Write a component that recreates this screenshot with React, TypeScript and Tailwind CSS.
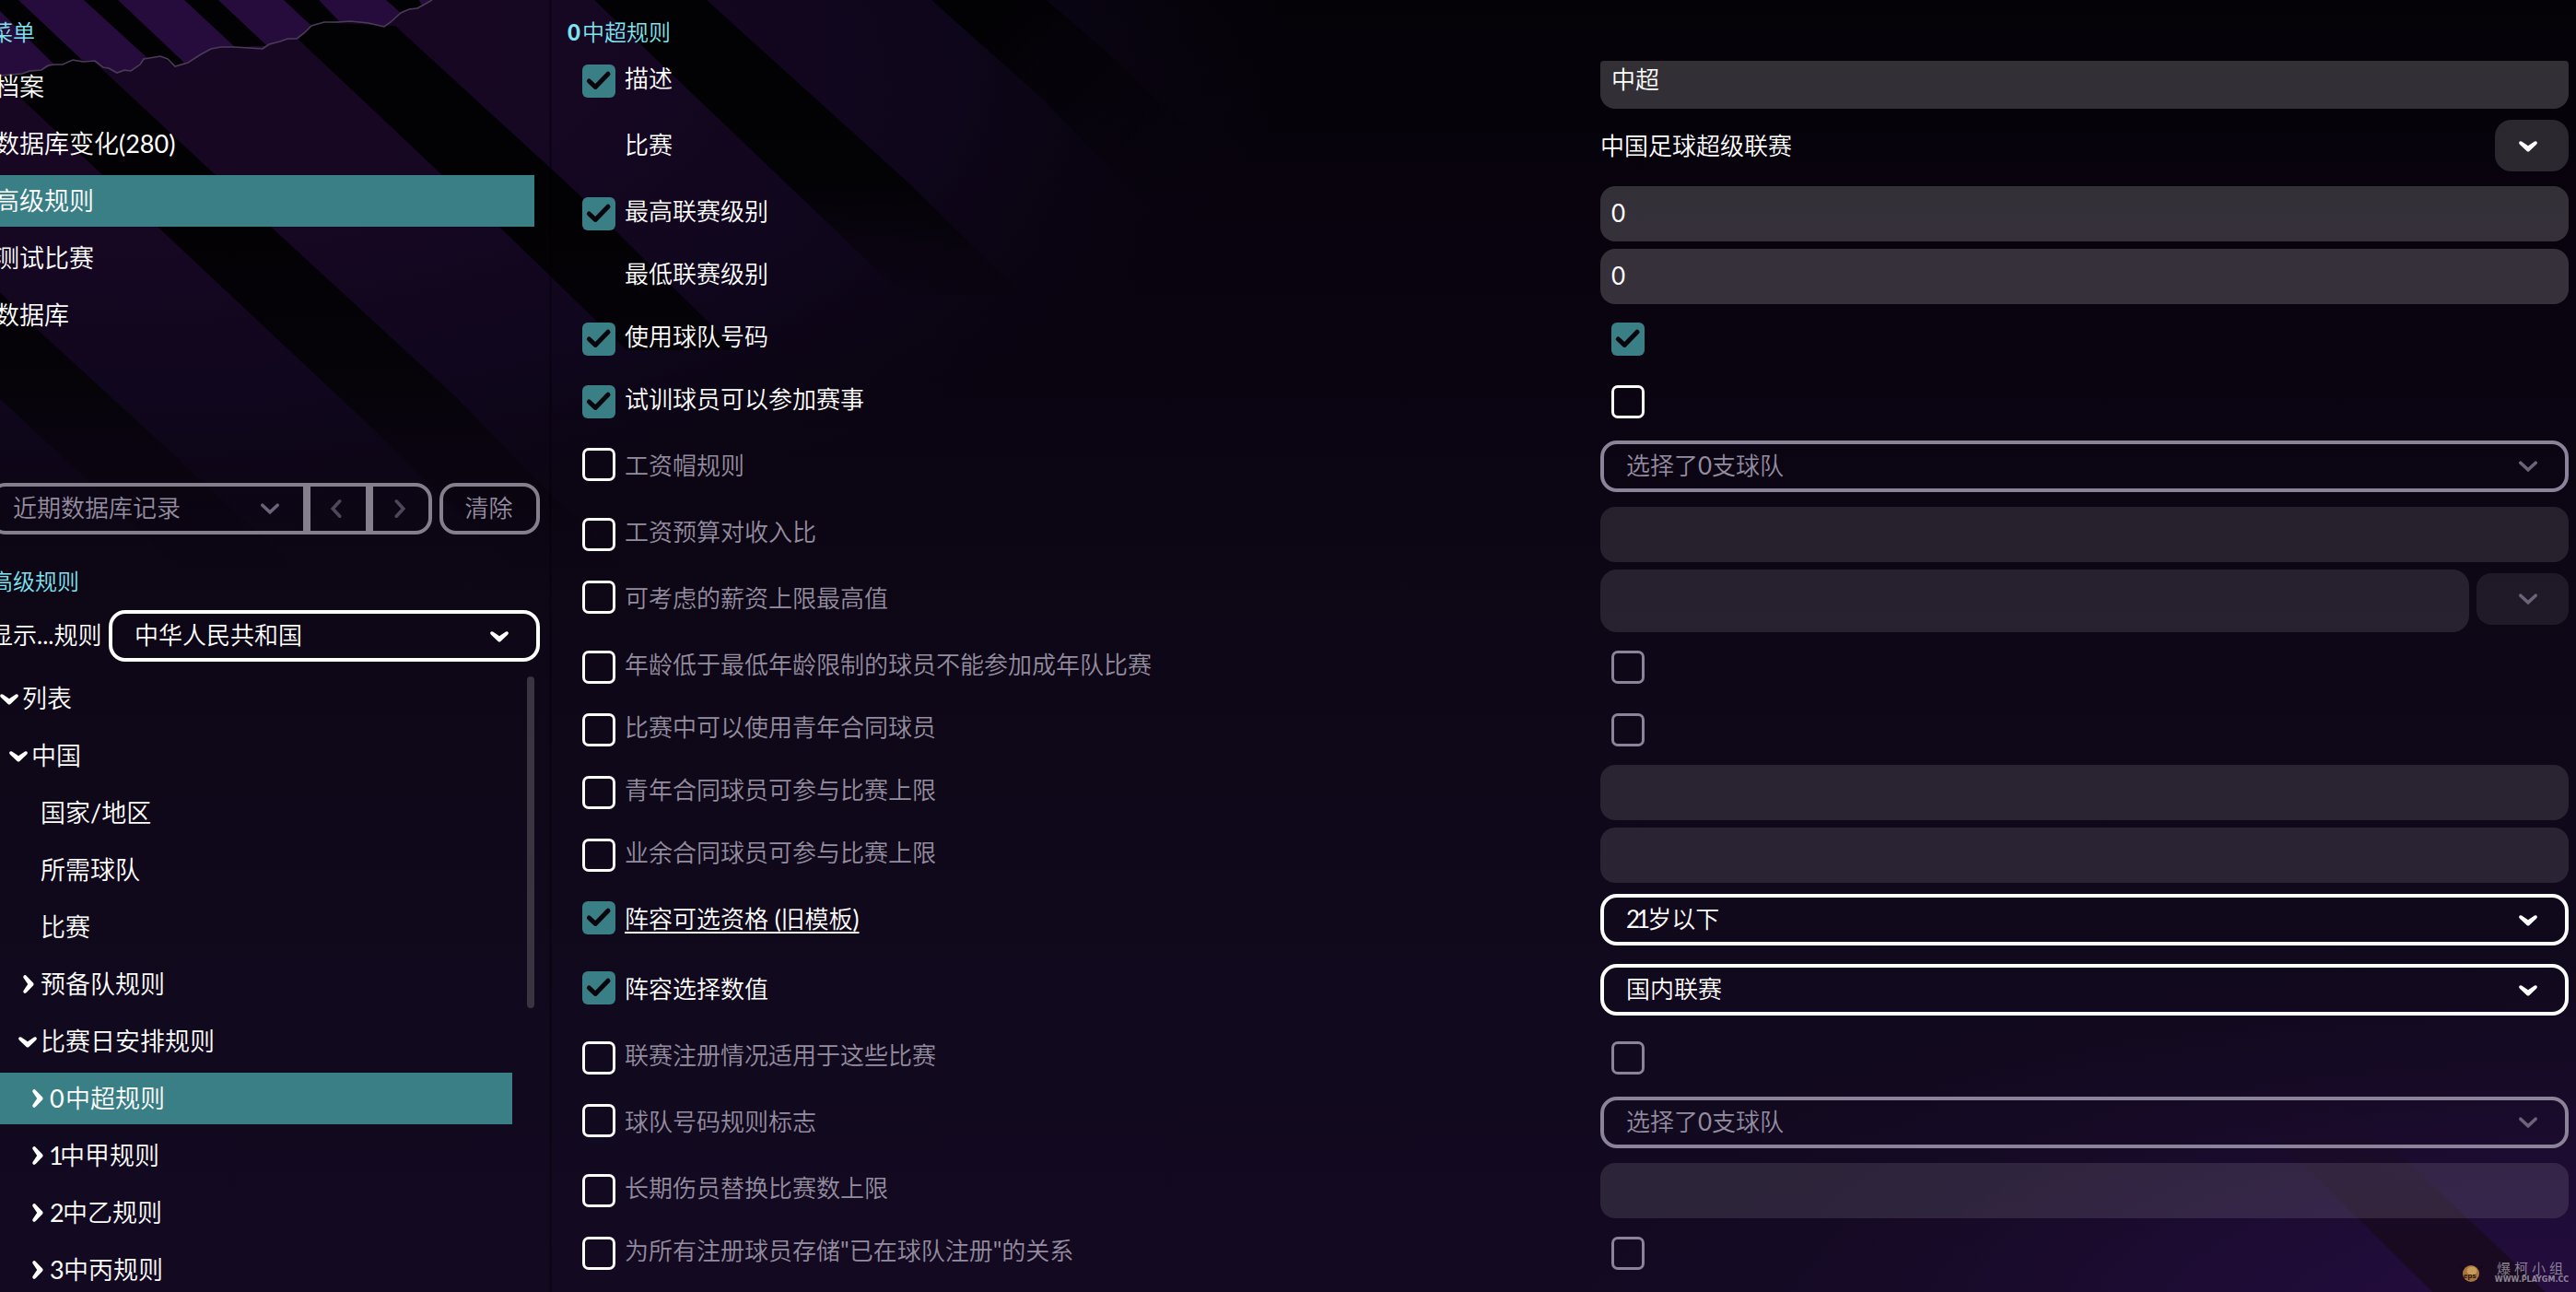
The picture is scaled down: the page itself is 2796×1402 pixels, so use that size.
import { type ReactNode } from 'react';
import clsx from 'clsx';

type Control =
  | { kind: 'input'; value?: string; clipped?: boolean }
  | { kind: 'select'; value: ReactNode }
  | { kind: 'check'; checked?: boolean }
  | { kind: 'link'; value: string }
  | { kind: 'money' };

interface Rule {
  label: string;
  // undefined means the rule has no override checkbox
  checked?: boolean;
  off?: boolean;
  underline?: boolean;
  control: Control;
}

const under21 = (
  <>
    2<span className="-mr-[3px] -ml-[4px]">1</span>岁以下
  </>
);

const rules: Rule[] = [
  { label: '描述', checked: true, control: { kind: 'input', value: '中超', clipped: true } },
  { label: '比赛', control: { kind: 'link', value: '中国足球超级联赛' } },
  { label: '最高联赛级别', checked: true, control: { kind: 'input', value: '0' } },
  { label: '最低联赛级别', control: { kind: 'input', value: '0' } },
  { label: '使用球队号码', checked: true, control: { kind: 'check', checked: true } },
  { label: '试训球员可以参加赛事', checked: true, control: { kind: 'check' } },
  { label: '工资帽规则', checked: false, off: true, control: { kind: 'select', value: '选择了0支球队' } },
  { label: '工资预算对收入比', checked: false, off: true, control: { kind: 'input' } },
  { label: '可考虑的薪资上限最高值', checked: false, off: true, control: { kind: 'money' } },
  { label: '年龄低于最低年龄限制的球员不能参加成年队比赛', checked: false, off: true, control: { kind: 'check' } },
  { label: '比赛中可以使用青年合同球员', checked: false, off: true, control: { kind: 'check' } },
  { label: '青年合同球员可参与比赛上限', checked: false, off: true, control: { kind: 'input' } },
  { label: '业余合同球员可参与比赛上限', checked: false, off: true, control: { kind: 'input' } },
  { label: '阵容可选资格 (旧模板)', checked: true, underline: true, control: { kind: 'select', value: under21 } },
  { label: '阵容选择数值', checked: true, control: { kind: 'select', value: '国内联赛' } },
  { label: '联赛注册情况适用于这些比赛', checked: false, off: true, control: { kind: 'check' } },
  { label: '球队号码规则标志', checked: false, off: true, control: { kind: 'select', value: '选择了0支球队' } },
  { label: '长期伤员替换比赛数上限', checked: false, off: true, control: { kind: 'input' } },
  { label: '为所有注册球员存储"已在球队注册"的关系', checked: false, off: true, control: { kind: 'check' } },
];

const menu = ['档案', '数据库变化(280)', '高级规则', '测试比赛', '数据库'];

interface Node {
  label: string;
  digit?: string;
  pad: string;
  open?: boolean;
  selected?: boolean;
}

const tree: Node[] = [
  { label: '列表', pad: 'pl-0', open: true },
  { label: '中国', pad: 'pl-[10px]', open: true },
  { label: '国家/地区', pad: 'pl-[20px]' },
  { label: '所需球队', pad: 'pl-[20px]' },
  { label: '比赛', pad: 'pl-[20px]' },
  { label: '预备队规则', pad: 'pl-[20px]', open: false },
  { label: '比赛日安排规则', pad: 'pl-[20px]', open: true },
  { label: '中超规则', digit: '0', pad: 'pl-[30px]', open: false, selected: true },
  { label: '中甲规则', digit: '1', pad: 'pl-[30px]', open: false },
  { label: '中乙规则', digit: '2', pad: 'pl-[30px]', open: false },
  { label: '中丙规则', digit: '3', pad: 'pl-[30px]', open: false },
];

const digitWidth: Record<string, string> = {
  '0': 'w-[17px]',
  '1': '-ml-px w-[12px]',
  '2': 'w-[14px]',
  '3': 'w-[15px]',
};

// Solid chevron, drawn pointing down
function Chevron({ className }: { className?: string }) {
  return (
    <svg viewBox="0 0 20 12" className={clsx('h-3 w-5 shrink-0', className)} fill="currentColor">
      <path d="M3 .5 Q10 5.2 10 5.2 Q10 5.2 17 .5 Q19 -.2 19.8 1.4 Q20.2 2.8 18.8 4 L11.4 11 Q10 12.2 8.6 11 L1.2 4 Q-.2 2.8 .2 1.4 Q1 -.2 3 .5Z" />
    </svg>
  );
}

function ThinChevron({ className }: { className?: string }) {
  return (
    <svg viewBox="0 0 20 12" className={clsx('h-3 w-5 shrink-0 overflow-visible', className)} fill="none" stroke="currentColor" strokeWidth="3.6" strokeLinecap="round">
      <path d="M1.8 2.2 L10 9.8 L18.2 2.2" />
    </svg>
  );
}

function CheckBox({ checked, off }: { checked?: boolean; off?: boolean }) {
  if (checked) {
    return (
      <div className="size-9 rounded-[6px] bg-[#3a7f86]">
        <svg viewBox="0 0 36 36" className="size-9" fill="none" stroke="#06050c" strokeWidth="5" strokeLinejoin="round" strokeLinecap="round">
          <path d="M7.4 18 L14.2 24.4 L28 10.2" />
        </svg>
      </div>
    );
  }
  return <div className={clsx('size-9 rounded-[7px] border-[3px]', off ? 'border-[#8b8399]' : 'border-white')} />;
}

function Field({ control, off }: { control: Control; off?: boolean }) {
  switch (control.kind) {
    case 'input':
      return (
        <div
          className={clsx(
            'flex grow pl-3',
            control.clipped ? 'mt-3 h-[52px] rounded-t-[4px] rounded-b-[16px]' : 'mt-1 h-[60px] rounded-[16px]',
            off ? 'bg-white/11' : 'bg-white/18',
          )}
        >
          <span className={clsx('leading-9', control.clipped ? 'mt-[2px]' : 'mt-[11px]')}>{control.value}</span>
        </div>
      );
    case 'select':
      return (
        <div
          className={clsx(
            'mt-2 flex h-14 grow items-center justify-between rounded-[18px] border-4 pr-[30px] pl-6',
            off ? 'border-[#8b8399] text-[#948c9f]' : 'border-white',
          )}
        >
          <span className="pb-[2px] leading-9">{control.value}</span>
          {off ? <ThinChevron className="text-[#6b6478]" /> : <Chevron className="mt-[2px]" />}
        </div>
      );
    case 'check':
      return (
        <div className="mt-4 ml-3">
          <CheckBox checked={control.checked} off={off} />
        </div>
      );
    case 'link':
      return (
        <>
          <span className="mt-[18px] grow leading-9">{control.value}</span>
          <div className="mt-2 flex h-14 w-20 items-center rounded-[18px] bg-white/15 pl-[26px]">
            <Chevron className="mt-[2px]" />
          </div>
        </>
      );
    case 'money':
      return (
        <div className="flex grow gap-2">
          <div className="mt-1 h-[68px] grow rounded-[18px] bg-white/11" />
          <div className="mt-2 flex h-14 w-[100px] items-center rounded-[16px] bg-white/8 pl-[46px]">
            <ThinChevron className="text-[#6b6478]" />
          </div>
        </div>
      );
  }
}

function RuleRow({ rule }: { rule: Rule }) {
  const tall = rule.control.kind === 'select' || rule.control.kind === 'link' || rule.control.kind === 'money';
  return (
    <div className={clsx('flex shrink-0 items-start', tall ? 'h-[76px]' : 'h-[68px]')}>
      <div className="mt-4 mr-[10px] w-9 shrink-0">
        {rule.checked !== undefined && <CheckBox checked={rule.checked} />}
      </div>
      <div
        className={clsx(
          'w-[1059px] shrink-0 leading-9',
          tall ? 'mt-[17px]' : 'mt-[13px]',
          rule.off && 'text-[#948c9f]',
          rule.underline && 'underline decoration-2 underline-offset-[4px]',
        )}
      >
        {rule.label}
      </div>
      <Field control={rule.control} off={rule.off} />
    </div>
  );
}

function TreeRow({ node }: { node: Node }) {
  return (
    <div className={clsx('flex h-14 w-[556px] shrink-0 items-center', node.pad, node.selected && 'bg-[#3a7f86]')}>
      <span className={clsx('flex w-6 justify-center', node.open ? 'pr-1' : 'pr-[2px]')}>
        {node.open === true && <Chevron className="mt-[2px]" />}
        {node.open === false && <Chevron className="-rotate-90" />}
      </span>
      {node.digit && <span className={clsx('whitespace-nowrap', digitWidth[node.digit])}>{node.digit}</span>}
      <span>{node.label}</span>
    </div>
  );
}

function Backdrop() {
  return (
    <svg viewBox="0 0 2796 1402" className="absolute inset-0 -z-10 h-full w-full" preserveAspectRatio="none">
      <defs>
        <linearGradient id="base" x1="0" y1="0" x2="0" y2="1">
          <stop offset="0" stopColor="#040207" />
          <stop offset=".2" stopColor="#09030f" />
          <stop offset=".6" stopColor="#0f0819" />
          <stop offset="1" stopColor="#130a22" />
        </linearGradient>
        <radialGradient id="glow" gradientUnits="userSpaceOnUse" cx="150" cy="100" r="1250" gradientTransform="matrix(1 0 0 .45 0 0)">
          <stop offset="0" stopColor="#180724" />
          <stop offset=".4" stopColor="#160722" />
          <stop offset=".7" stopColor="#110720" stopOpacity=".8" />
          <stop offset="1" stopColor="#0c0616" stopOpacity="0" />
        </radialGradient>
        <radialGradient id="corner" gradientUnits="userSpaceOnUse" cx="2796" cy="1430" r="1100" gradientTransform="matrix(1 0 0 .36 0 915)">
          <stop offset="0" stopColor="#260d42" />
          <stop offset=".4" stopColor="#1f0c36" stopOpacity=".85" />
          <stop offset="1" stopColor="#180a26" stopOpacity="0" />
        </radialGradient>
        <linearGradient id="fade" gradientUnits="userSpaceOnUse" x1="0" y1="200" x2="0" y2="640">
          <stop offset="0" stopColor="#020103" />
          <stop offset=".5" stopColor="#060309" />
          <stop offset="1" stopColor="#0a0410" stopOpacity="0" />
        </linearGradient>
        <linearGradient id="fadeTop" gradientUnits="userSpaceOnUse" x1="0" y1="60" x2="0" y2="340">
          <stop offset="0" stopColor="#020103" />
          <stop offset=".5" stopColor="#030205" />
          <stop offset="1" stopColor="#070309" stopOpacity="0" />
        </linearGradient>
        {/* runs along the band, so that its far end has no visible edge */}
        <linearGradient id="fadeAlong" gradientUnits="userSpaceOnUse" x1="1080" y1="0" x2="1300" y2="220">
          <stop offset="0" stopColor="#020103" />
          <stop offset="1" stopColor="#050208" stopOpacity="0" />
        </linearGradient>
        <linearGradient id="fadeCorner" gradientUnits="userSpaceOnUse" x1="0" y1="1190" x2="0" y2="1340">
          <stop offset="0" stopColor="#1a0b24" stopOpacity="0" />
          <stop offset="1" stopColor="#190a22" />
        </linearGradient>
      </defs>
      <rect width="2796" height="1402" fill="url(#base)" />
      <rect width="2796" height="1402" fill="url(#glow)" />
      <path d="M-14 72 L101 66 L295 247 L494 430 L680 620 L560 620 L399 460 L172 247Z" fill="url(#fade)" />
      <path d="M324 43 L340 24 L429 28 L620 203 L800 380 L680 380 L544 248 L480 190Z" fill="url(#fade)" />
      <path d="M0 317 L40 357 L174 480 L330 625 L200 625 L97 523 L0 433Z" fill="url(#fade)" />
      <path d="M645 0 L767 0 L988 200 L1110 320 L980 320 L868 213Z" fill="url(#fadeTop)" />
      <path d="M1011 0 L1136 0 L1194 50 L1400 240 L1400 380 L1280 260 L1131 107Z" fill="url(#fadeAlong)" />
      {/* torn paper strip along the top left */}
      <path
        d="M0 0 H469 L453 9 L435 14 L417 29 L380 23 L352 24 L338 28 L322 42 L304 45 L285 53 L253 51 L229 53 L204 68 L190 72 L174 61 L156 64 L142 77 L127 79 L103 66 L79 65 L59 70 L45 76 L24 80 L0 82Z"
        fill="#260c3d"
      />
      <path d="M0 0 H20 L89 65 L59 70 L0 12Z M91 0 H128 L200 68 L190 72 L174 61 L160 63Z M200 0 H237 L290 50 L255 51Z M308 0 H346 L368 23 L338 28Z M419 0 H455 L458 6 L435 14Z" fill="#020103" />
      <path
        d="M0 82 L24 80 L32 77 L45 76 L52 71 L59 70 L68 70 L79 65 L90 67 L103 66 L112 73 L118 74 L127 79 L135 76 L142 77 L152 70 L156 64 L174 61 L182 64 L190 72 L204 68 L218 59 L229 53 L240 51 L253 51 L285 53 L292 48 L304 45 L312 42 L322 42 L330 36 L338 28 L352 24 L366 24 L380 23 L400 25 L417 29 L424 24 L435 14 L444 10 L453 9 L462 4 L469 0"
        fill="none"
        stroke="#4b3c55"
        strokeWidth="1.6"
      />
      <rect x="596" width="3" height="1402" fill="#000" opacity=".3" />
      <rect width="2796" height="1402" fill="url(#corner)" />
      <path d="M2420 1190 L2530 1190 L2617 1264 L2763 1402 L2640 1402 L2523 1286Z" fill="url(#fadeCorner)" />
    </svg>
  );
}

function Watermark() {
  return (
    <div className="absolute right-[7px] bottom-2 flex items-center gap-[9px] text-white/50">
      <svg viewBox="0 0 32 24" className="h-6 w-8">
        <path d="M3 4 L9 9 M16 1 V5 M29 5 L23 9" stroke="#120818" strokeWidth="1.5" />
        <ellipse cx="16" cy="13" rx="9" ry="9" fill="#a8743a" />
        <ellipse cx="17" cy="10" rx="5.5" ry="4.5" fill="#c99a58" />
        <text x="8" y="18" fontSize="8" fontWeight="700" fill="#1c0f14" fontFamily="Liberation Sans, sans-serif">eps</text>
      </svg>
      <div className="flex w-[82px] flex-col items-center">
        <span className="text-[15px] leading-4 font-medium tracking-[4px]">爆柯小组</span>
        <span className="font-['DejaVu_Sans',sans-serif] text-[8px] leading-[10px] font-bold">WWW.PLAYGM.CC</span>
      </div>
    </div>
  );
}

export default function App() {
  return (
    <div className="relative isolate flex h-[1402px] w-[2796px] overflow-hidden bg-[#0a0410] font-[Lato,'Noto_Sans_CJK_SC_DemiLight','Noto_Sans_CJK_SC',sans-serif] text-[26px] text-white">
      <Backdrop />

      <aside className="flex w-[598px] shrink-0 flex-col overflow-hidden">
        <h2 className="mt-[17px] -ml-[10px] shrink-0 text-[24px] leading-9 text-[#7fe3f0]">菜单</h2>
        <nav className="mt-[13px] flex shrink-0 flex-col gap-[6px] text-[27px]">
          {menu.map((item) => (
            <div key={item} className={clsx('flex h-14 w-[580px] items-center', item === '高级规则' && 'bg-[#3a7f86]')}>
              <span className="-ml-[6px]">{item}</span>
            </div>
          ))}
        </nav>

        <div className="mt-[154px] -ml-3 flex h-14 shrink-0 gap-2 text-[#948c9f]">
          <div className="flex">
            <div className="flex w-[345px] items-center justify-between rounded-l-[18px] border-4 border-[#857e8c] pr-[26px] pl-[22px]">
              <span className="pb-[2px]">近期数据库记录</span>
              <ThinChevron className="text-[#6b6478]" />
            </div>
            <div className="flex w-[68px] items-center justify-center border-4 border-[#857e8c] pr-[5px]">
              <ThinChevron className="rotate-90 text-[#4e475a]" />
            </div>
            <div className="flex w-[68px] items-center justify-center rounded-r-[18px] border-4 border-[#857e8c] pr-[3px]">
              <ThinChevron className="-rotate-90 text-[#4e475a]" />
            </div>
          </div>
          <div className="flex w-[109px] items-center justify-center rounded-[18px] border-4 border-[#857e8c] pr-[2px] pb-[2px]">清除</div>
        </div>

        <h2 className="mt-[33px] -ml-[10px] shrink-0 text-[24px] leading-9 text-[#7fe3f0]">高级规则</h2>
        <div className="mt-[13px] -ml-3 flex h-14 shrink-0 items-center">
          <span className="w-[130px] pb-[2px] whitespace-nowrap">显示...规则</span>
          <div className="flex h-14 w-[468px] items-center justify-between rounded-[18px] border-4 border-white pr-[30px] pl-6">
            <span className="pb-[2px]">中华人民共和国</span>
            <Chevron className="mt-[2px]" />
          </div>
        </div>

        <div className="mt-3 flex shrink-0">
          <div className="flex w-[572px] flex-col gap-[6px] text-[27px]">
            {tree.map((node) => (
              <TreeRow key={node.label + (node.digit ?? '')} node={node} />
            ))}
          </div>
          <div className="mt-1 h-[360px] w-2 rounded-full bg-[#3a3342]" />
        </div>
      </aside>

      <main className="flex grow flex-col pr-2">
        <h2 className="mt-[17px] ml-[18px] h-[37px] text-[24px] leading-9 text-[#7fe3f0]">
          <span className="inline-block w-4 font-black">0</span>中超规则
        </h2>
        <div className="flex flex-col pl-[34px]">
          {rules.map((rule) => (
            <RuleRow key={rule.label} rule={rule} />
          ))}
        </div>
      </main>

      <Watermark />
    </div>
  );
}
